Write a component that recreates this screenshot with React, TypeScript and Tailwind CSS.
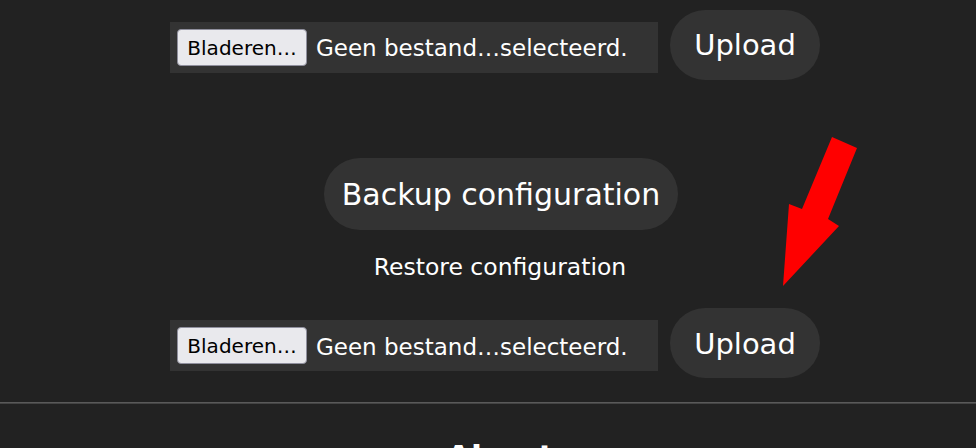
import React from 'react'

function FileRow() {
  return (
    <div className="flex items-start pr-[10px]">
      {/* fake file input, Dutch labels */}
      <div className="mt-[12px] flex h-[51px] w-[488px] items-center gap-[9px] bg-[#333] pl-[7px]">
        <div className="flex h-[37px] w-[130px] items-center justify-center rounded-[4px] border border-[#8f8f9d] bg-[#e9e9ed] text-[20px] text-black">
          Bladeren…
        </div>
        <span className="whitespace-nowrap pt-[2px] text-[23px] text-white">Geen bestand…selecteerd.</span>
      </div>
      <button className="ml-[12px] h-[70px] w-[150px] rounded-full bg-[#333] pt-[2px] text-[29px] text-white">
        Upload
      </button>
    </div>
  )
}

export default function App() {
  return (
    <div
      className="relative h-[448px] overflow-hidden bg-[#222] text-white"
      style={{ fontFamily: '"DejaVu Sans", Verdana, sans-serif' }}
    >
      <div className="flex flex-col items-center pl-[24px] pt-[10px]">
        <FileRow />

        <button className="mt-[78px] ml-[2px] h-[72px] rounded-full bg-[#333] px-[18px] text-[30px] text-white">
          Backup configuration
        </button>

        <p className="mt-[20px] text-[23.5px]">Restore configuration</p>

        <div className="mt-[23px]">
          <FileRow />
        </div>
      </div>

      <div className="mt-[24px] h-[2px] border-t border-[#5a5a5a] bg-[#444]" />

      <h2 className="mt-[37px] pl-[24px] text-center text-[32px] font-bold leading-none">About</h2>

      {/* red annotation arrow */}
      <svg className="pointer-events-none absolute left-0 top-0" width="976" height="448">
        <polygon points="832,137 857,148 828,219 839,226 783,286 789,204 802,209" fill="#ff0000" />
      </svg>
    </div>
  )
}
